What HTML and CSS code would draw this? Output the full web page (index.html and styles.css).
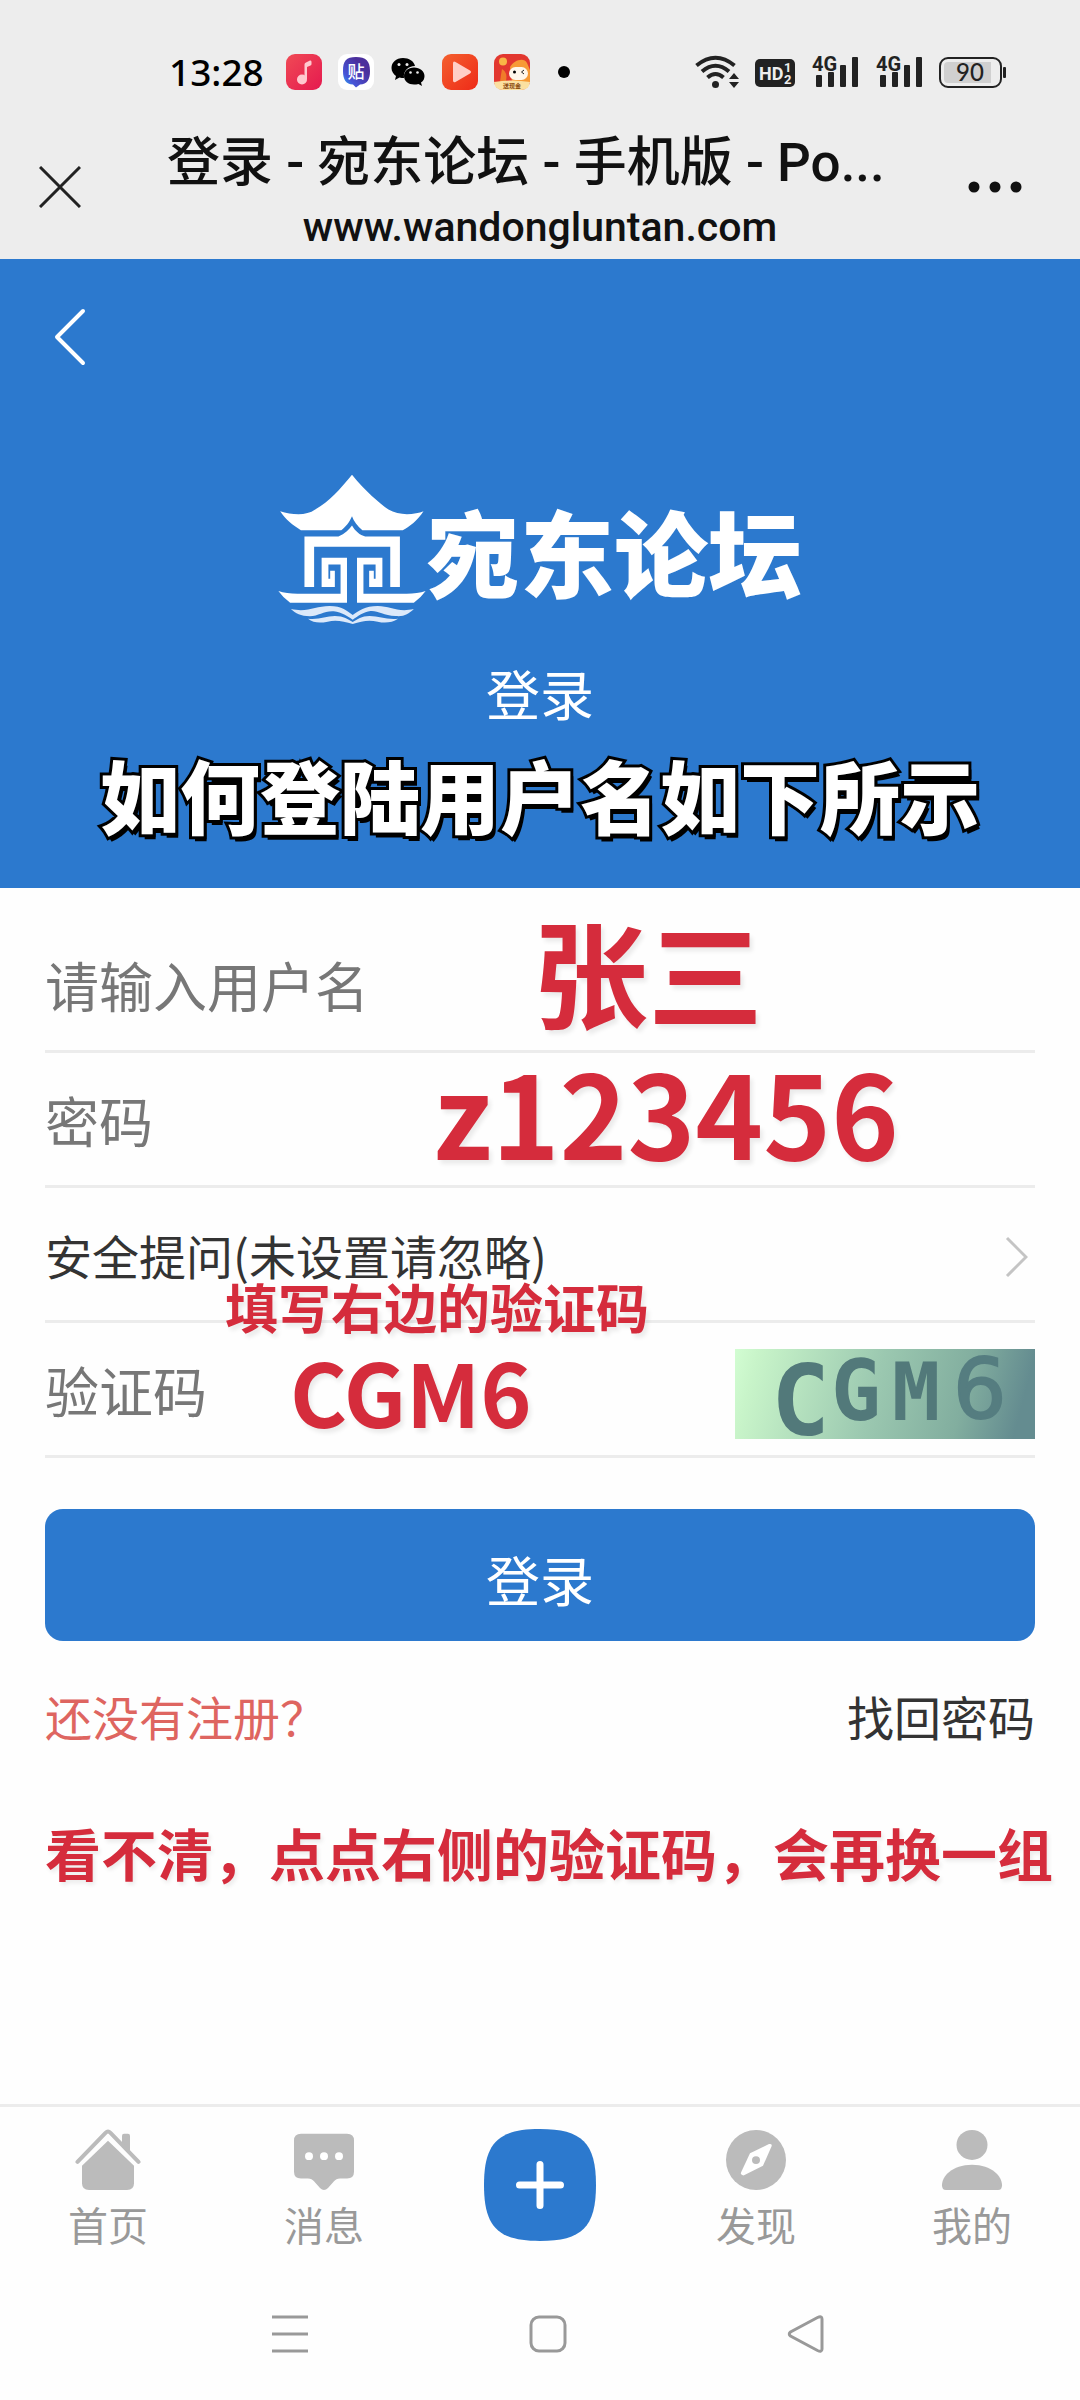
FILE: index.html
```html
<!DOCTYPE html>
<html lang="zh-CN">
<head>
<meta charset="utf-8">
<meta name="viewport" content="width=device-width, initial-scale=1">
<title>登录 - 宛东论坛</title>
<link rel="stylesheet" href="styles.css">
</head>
<body>
<header class="top">
  <div class="status">
    <div class="status-left">
      <time class="clock">13:28</time>
      <svg width="36" height="36" viewBox="0 0 36 36" aria-hidden="true">
        <defs><linearGradient id="music" x1="0" y1="0" x2="1" y2="1"><stop offset="0" stop-color="#f04a55"/><stop offset="1" stop-color="#e5194f"/></linearGradient></defs>
        <rect width="36" height="36" rx="9" fill="url(#music)"/>
        <path d="M18.500 25V10.500Q18.500 9 20 8.500L24 6.500Q25.500 6 25.500 8V10Q25.500 11 24.500 11.500L21 13V25Z" fill="#ffc9cf"/>
        <circle cx="16" cy="25.500" r="5" fill="#ffc9cf"/>
      </svg>
      <svg width="36" height="36" viewBox="0 0 36 36" aria-hidden="true">
        <defs><linearGradient id="tie" x1="1" y1="0" x2="0" y2="1"><stop offset=".3" stop-color="#4b2f9c"/><stop offset=".75" stop-color="#4655d8"/><stop offset="1" stop-color="#1fc4f5"/></linearGradient></defs>
        <rect width="36" height="36" rx="9" fill="#fff"/>
        <path d="M18 3C28 3 32 7 32 17C32 26 29 30 22 30.500L18 33.500L15 30.500C8 30 5 26 5 17C5 7 8 3 18 3Z" fill="url(#tie)"/>
        <text x="18" y="23.500" class="glyph-tie">贴</text>
      </svg>
      <svg width="36" height="36" viewBox="0 0 36 36" aria-hidden="true">
        <path d="M13 4C6 4 1.500 8.500 1.500 14C1.500 17.500 3.500 20 6 22L5 26L9.500 23.500C11 24 12.500 24 14 24C13 17 18 12 25 12C24 7 19 4 13 4Z"/>
        <path d="M24 13.500C18 13.500 14 17.500 14 22C14 27 18.500 30.500 24 30.500C25.500 30.500 27 30.500 28.500 30L32 32L31 28.500C33.500 27 34.500 24.500 34.500 22C34.500 17.500 30 13.500 24 13.500Z"/>
        <g fill="#ededed"><circle cx="9" cy="10.500" r="1.500"/><circle cx="17" cy="10.500" r="1.500"/><circle cx="20.500" cy="18.500" r="1.300"/><circle cx="27.500" cy="18.500" r="1.300"/></g>
      </svg>
      <svg width="36" height="36" viewBox="0 0 36 36" aria-hidden="true">
        <defs><linearGradient id="play" x1="0" y1="0" x2="1" y2="1"><stop offset="0" stop-color="#f4602e"/><stop offset="1" stop-color="#ee2a18"/></linearGradient></defs>
        <rect width="36" height="36" rx="9" fill="url(#play)"/>
        <path d="M11 9.500Q11 6.500 13.500 8L28 16.500Q30 18 28 19.500L13.500 28Q11 29 11 26.500Z" fill="#ffcfc6"/>
      </svg>
      <svg width="36" height="36" viewBox="0 0 36 36" aria-hidden="true">
        <rect width="36" height="36" rx="9" fill="#e2372f"/>
        <path d="M16 13C20 6 30 3 33 9L36 16V28H18Z" fill="#f79a35"/>
        <path d="M8 15Q14 18 12 28H6Q7 20 8 15Z" fill="#f07c2a"/>
        <circle cx="9" cy="7.500" r="4" fill="#f9b646"/>
        <rect x="15" y="13" width="19" height="13" rx="6.500" fill="#fff7ea"/>
        <circle cx="20.500" cy="18" r="1.500"/><path d="M30 16L27.500 18L30 20" stroke="#222" fill="none"/>
        <path d="M0 28Q18 25 36 28Q35 36 27 36H9Q1 36 0 28Z" fill="#fbe0a0"/>
        <text x="18" y="34" class="glyph-cash">送现金</text>
      </svg>
      <svg width="36" height="36" viewBox="0 0 36 36" aria-hidden="true"><circle cx="18" cy="18" r="6"/></svg>
    </div>
    <div class="status-right">
      <svg width="44" height="36" viewBox="0 0 44 36" aria-hidden="true">
        <g fill="none" stroke="#222" stroke-width="4"><path d="M1.500 11.500Q20.500 -4 39.500 11.500"/><path d="M7 17.500Q20.500 6 34 17.500"/><path d="M12.500 23.500Q20.500 16.500 28.500 23.500"/></g>
        <circle cx="20.500" cy="30.500" r="3.500" fill="#222"/><path d="M34 25L39 19L44 25ZM34 28H44L39 34Z" fill="#222"/>
      </svg>
      <svg width="40" height="36" viewBox="0 0 40 36" aria-hidden="true">
        <rect y="5" width="40" height="28" rx="5" fill="#222"/>
        <text x="4" y="26" class="glyph-hd">HD</text><text x="29" y="18" class="glyph-sim">1</text><text x="29" y="30" class="glyph-sim">2</text>
      </svg>
      <svg width="48" height="36" viewBox="0 0 48 36" aria-hidden="true">
        <text x="1" y="17" class="glyph-net">4G</text>
        <g fill="#222"><rect x="5" y="21" width="6" height="12" rx="1"/><rect x="17" y="18" width="6" height="15" rx="1"/><rect x="29" y="11" width="6" height="22" rx="1"/><rect x="41" y="3" width="6" height="30" rx="1"/></g>
      </svg>
      <svg width="48" height="36" viewBox="0 0 48 36" aria-hidden="true">
        <text x="1" y="17" class="glyph-net">4G</text>
        <g fill="#222"><rect x="5" y="21" width="6" height="12" rx="1"/><rect x="17" y="18" width="6" height="15" rx="1"/><rect x="29" y="11" width="6" height="22" rx="1"/><rect x="41" y="3" width="6" height="30" rx="1"/></g>
      </svg>
      <svg width="67" height="36" viewBox="0 0 67 36" aria-hidden="true">
        <rect x="1" y="4" width="61" height="29" rx="8" fill="none" stroke="#222" stroke-width="2"/>
        <path d="M9 8H52V29H9Q5 29 5 25V12Q5 8 9 8Z" fill="#d0d0d0"/>
        <rect x="64" y="13" width="3" height="11" rx="1" fill="#222"/>
        <text x="31" y="27" class="glyph-battery">90</text>
      </svg>
    </div>
  </div>
  <div class="titlebar">
    <button class="icon-button" type="button" aria-label="关闭">
      <svg width="42" height="42" viewBox="0 0 42 42"><path d="M1 1L41 41M41 1L1 41" stroke="#222" stroke-width="3"/></svg>
    </button>
    <div class="page-name">
      <h1 class="page-title">登录 - 宛东论坛 - 手机版 - Po...</h1>
      <p class="page-url">www.wandongluntan.com</p>
    </div>
    <button class="icon-button" type="button" aria-label="更多">
      <svg width="54" height="42" viewBox="0 0 54 42"><g fill="#111"><circle cx="6" cy="21" r="5.500"/><circle cx="27" cy="21" r="5.500"/><circle cx="48" cy="21" r="5.500"/></g></svg>
    </button>
  </div>
</header>

<section class="hero">
  <button class="icon-button back" type="button" aria-label="返回">
    <svg width="34" height="60" viewBox="0 0 34 60"><path d="M30 4L4 30L30 56" fill="none" stroke="#fff" stroke-width="4" stroke-linecap="round" stroke-linejoin="round"/></svg>
  </button>
  <div class="logo">
    <svg width="148" height="151" viewBox="56 73 414 454" preserveAspectRatio="none" aria-hidden="true">
      <g fill="#fff">
        <path d="M263 75C300 125 340 160 365 180C395 200 440 195 463 185C445 215 425 230 405 242H292C278 230 268 215 263 200C255 220 245 232 233 242H120C95 225 78 210 62 185C95 196 135 200 160 180C200 155 230 118 263 75Z"/>
        <path d="M130 261H225C243 253 255 240 263 228C272 245 285 257 300 261H397V413H370V292H157V413H130Z"/>
        <path id="scroll" d="M178 325H249V460H90Q70 445 57 425Q80 433 110 433H231V345H197V388H202V364H215V413H178Z"/>
        <use href="#scroll" transform="translate(526 0) scale(-1 1)"/>
      </g>
      <g fill="#dce9fa">
        <path d="M92 479C140 490 160 470 200 470C235 470 250 485 265 497C280 485 300 470 335 470C370 470 390 490 436 479C420 495 410 502 385 500C350 498 335 483 315 485C295 488 280 500 265 511C250 502 235 488 212 486C185 484 170 500 145 501C120 500 105 492 92 479Z"/>
        <path d="M140 508C170 512 190 500 215 500C240 500 252 510 265 518C278 510 290 500 312 500C340 500 360 512 392 508C375 520 355 522 335 517C310 511 290 515 265 524C240 515 215 511 195 517C170 522 155 520 140 508Z"/>
      </g>
    </svg>
    <span class="logo-text">宛东论坛</span>
  </div>
  <h2 class="hero-title">登录</h2>
  <p class="headline">如何登陆用户名如下所示</p>
</section>

<main class="main">
  <form class="form">
    <div class="row">
      <input class="field" type="text" placeholder="请输入用户名" aria-label="请输入用户名">
      <span class="note note-user">张三</span>
    </div>
    <div class="row">
      <input class="field" type="password" placeholder="密码" aria-label="密码">
      <span class="note note-pass">z123456</span>
    </div>
    <div class="row">
      <select class="field question" aria-label="安全提问"><option>安全提问(未设置请忽略)</option></select>
      <svg class="arrow" width="24" height="42" viewBox="0 0 24 42" aria-hidden="true"><path d="M3 2L22 21L3 40" fill="none" stroke="#c4c4c4" stroke-width="3"/></svg>
    </div>
    <div class="row">
      <input class="field" type="text" placeholder="验证码" aria-label="验证码">
      <span class="note note-hint">填写右边的验证码</span>
      <span class="note note-code">CGM6</span>
      <button class="icon-button captcha" type="button" aria-label="换一组验证码">
        <svg width="300" height="90" viewBox="0 0 300 90">
          <defs><linearGradient id="cap" x1="0" y1="0" x2="1" y2=".08"><stop offset="0" stop-color="#d2fdd2"/><stop offset=".08" stop-color="#c8f4c9"/><stop offset=".5" stop-color="#9bc8b0"/><stop offset=".8" stop-color="#82ae9f"/><stop offset="1" stop-color="#648c90"/></linearGradient></defs>
          <rect width="300" height="90" fill="url(#cap)"/>
          <g class="captcha-text"><text x="36" y="86" font-size="98">C</text><text x="96" y="71" font-size="83">G</text><text x="157" y="71" font-size="80">M</text><text x="218" y="69" font-size="84" class="thin">6</text></g>
        </svg>
      </button>
    </div>
    <button class="submit" type="submit">登录</button>
    <div class="links"><a class="register" href="#register">还没有注册？</a><a href="#recover">找回密码</a></div>
  </form>
  <p class="tip">看不清，点点右侧的验证码，会再换一组</p>
</main>

<nav class="tabs">
  <a class="tab" href="#home">
    <svg width="66" height="62" viewBox="0 0 66 64" preserveAspectRatio="none" aria-hidden="true"><g fill="#bbb"><path d="M33 12L59 38V56Q59 63 52 63H14Q7 63 7 56V38Z"/><path d="M47 7Q47 5 49 5H53Q55 5 55 7V24L47 16Z"/></g><path d="M2.500 34L30.500 4Q33 1.500 35.500 4L63.500 34" fill="none" stroke="#bbb" stroke-width="4" stroke-linecap="round"/></svg>
    <span>首页</span>
  </a>
  <a class="tab" href="#messages">
    <svg width="66" height="62" viewBox="0 0 66 64" preserveAspectRatio="none" aria-hidden="true"><path d="M10 5H56Q63 5 63 12V44Q63 51 56 51H49Q45 51 43 54L37 61Q33 65 29 61L23 54Q21 51 17 51H10Q3 51 3 44V12Q3 5 10 5Z" fill="#bbb"/><g fill="#fff"><circle cx="18" cy="28" r="4"/><circle cx="33" cy="28" r="4"/><circle cx="48" cy="28" r="4"/></g></svg>
    <span>消息</span>
  </a>
  <a class="tab" href="#post" aria-label="发帖">
    <svg width="112" height="112" viewBox="0 0 112 112" aria-hidden="true"><path d="M56 0C98 0 112 14 112 56C112 98 98 112 56 112C14 112 0 98 0 56C0 14 14 0 56 0Z" fill="#2c79ce"/><path d="M35.500 56H76.500M56 35.500V76.500" stroke="#fff" stroke-width="7" stroke-linecap="round"/></svg>
  </a>
  <a class="tab" href="#discover">
    <svg width="66" height="62" viewBox="0 0 66 64" preserveAspectRatio="none" aria-hidden="true"><ellipse cx="33" cy="32" rx="30" ry="31" fill="#bbb"/><path d="M27 25L46 15.500Q49.500 15 48.500 18L40 38L20.500 48Q17.500 48 18 45Z" fill="#fff"/><circle cx="33" cy="32" r="4" fill="#bbb"/></svg>
    <span>发现</span>
  </a>
  <a class="tab" href="#mine">
    <svg width="66" height="62" viewBox="0 0 66 64" preserveAspectRatio="none" aria-hidden="true"><g fill="#bbb"><circle cx="33" cy="16.500" r="15.500"/><path d="M33 37C53 37 63 49 63 58Q63 63 59 63H7Q3 63 3 58C3 49 13 37 33 37Z"/></g></svg>
    <span>我的</span>
  </a>
</nav>

<footer class="system">
  <button class="icon-button" type="button" aria-label="最近任务"><svg width="38" height="38" viewBox="0 0 38 38"><path d="M1 2H37M1 19H37M1 36H37" stroke="#999" stroke-width="3"/></svg></button>
  <button class="icon-button" type="button" aria-label="主屏幕"><svg width="38" height="38" viewBox="0 0 38 38"><rect x="2" y="2" width="34" height="34" rx="8" fill="none" stroke="#999" stroke-width="3"/></svg></button>
  <button class="icon-button" type="button" aria-label="返回上一级"><svg width="38" height="38" viewBox="0 0 38 38"><path d="M30.500 2.500Q35 .5 35 4V34Q35 37.500 30.500 35.500L3.500 21Q1 19 3.500 17Z" fill="none" stroke="#999" stroke-width="3"/></svg></button>
</footer>
</body>
</html>
```
FILE: styles.css
```css
* {
  box-sizing: border-box;
}

body {
  margin: 0;
  min-height: 100vh;
  display: flex;
  flex-direction: column;
  background: #fefefe;
  color: #333;
  font-family: "Noto Sans CJK SC", sans-serif;
}

h1, h2, p {
  margin: 0;
  font-weight: 400;
}

a {
  color: inherit;
  text-decoration: none;
}

svg {
  display: block;
  flex: none;
}

.icon-button {
  padding: 0;
  border: 0;
  background: none;
  flex: none;
}

/* Status bar and browser title */
.top {
  background: #ededed;
}

.status {
  display: flex;
  justify-content: space-between;
  align-items: center;
  height: 110px;
  padding: 34px 74px 0 169px;
}

.status-left,
.status-right {
  display: flex;
  align-items: center;
  gap: 16px;
}

.clock {
  width: 101px;
  color: #000;
  font: 500 37px/40px "Noto Sans", sans-serif;
}

.glyph-tie {
  font-size: 17px;
  font-weight: 500;
  fill: #fff;
  text-anchor: middle;
}

.glyph-cash {
  font-size: 6px;
  font-weight: 700;
  fill: #8a4a10;
  text-anchor: middle;
}

.glyph-hd {
  font: 700 18px Roboto, sans-serif;
  fill: #eee;
}

.glyph-sim {
  font: 700 13px Roboto, sans-serif;
  fill: #eee;
}

.glyph-net {
  font: 700 20px Roboto, sans-serif;
  fill: #222;
}

.glyph-battery {
  font: 500 24px Lato, sans-serif;
  fill: #222;
  text-anchor: middle;
}

.titlebar {
  display: flex;
  justify-content: space-between;
  padding: 20px 58px 1px 39px;
}

.titlebar .icon-button {
  height: 42px;
  margin-top: 36px;
}

.page-name {
  flex: 1;
  margin: 0 55px 0 86px;
  color: #111;
  font-family: Roboto, "Noto Sans CJK SC", sans-serif;
}

.page-title {
  font-size: 53px;
  font-weight: 500;
  line-height: 66px;
  white-space: nowrap;
}

.page-url {
  font-size: 41px;
  font-weight: 500;
  line-height: 62px;
  text-align: center;
}

/* Blue banner */
.hero {
  display: flex;
  flex-direction: column;
  align-items: center;
  padding: 48px 53px 47px;
  background: #2c79ce;
  color: #fff;
}

.back {
  align-self: flex-start;
}

.logo {
  display: flex;
  align-items: center;
  margin-top: 107px;
}

.logo-text {
  font-size: 94px;
  font-weight: 900;
  line-height: 120px;
}

.hero-title {
  margin-top: 32px;
  font-size: 54px;
  line-height: 72px;
}

.headline {
  margin-top: 16px;
  font-size: 80px;
  font-weight: 900;
  line-height: 96px;
  white-space: nowrap;
  -webkit-text-stroke: 6px #000;
  paint-order: stroke fill;
  text-shadow: 3px 5px 0 #000;
}

/* Login form */
.main {
  flex: 1;
  padding: 30px 45px;
}

.row {
  position: relative;
  display: flex;
  align-items: center;
  height: 135px;
  border-bottom: 3px solid #ececec;
}

.field {
  flex: 1;
  min-width: 0;
  height: 100%;
  padding: 0;
  border: 0;
  outline: 0;
  appearance: none;
  background: none;
  color: #333;
  font: 400 54px "Noto Sans CJK SC", sans-serif;
}

.field::placeholder {
  color: #777;
  opacity: 1;
}

.question {
  font-size: 47px;
}

.arrow {
  margin: 6px 7px 0 0;
}

.captcha {
  margin-top: 9px;
}

/* Help notes laid over the form */
.note {
  position: absolute;
  color: #d52c3c;
  font-weight: 700;
  line-height: 1;
  white-space: nowrap;
  text-shadow: 3px 4px 4px rgba(0, 0, 0, .08);
  pointer-events: none;
}

.note-user {
  left: 488px;
  top: -5px;
  font-size: 115px;
}

.note-pass {
  left: 388px;
  top: 0;
  font-size: 115px;
}

.note-hint {
  left: 180px;
  top: -43px;
  font-size: 53px;
}

.note-code {
  left: 245px;
  top: 24px;
  font-size: 87px;
}

.captcha-text {
  font-family: "DejaVu Sans Mono", monospace;
  font-weight: 700;
  fill: #52797a;
}

.captcha-text .thin {
  font-family: "DejaVu Sans", sans-serif;
  font-weight: 400;
  fill: #557d80;
  stroke: #557d80;
  stroke-width: 2px;
}

.submit {
  display: block;
  width: 100%;
  height: 132px;
  margin-top: 51px;
  padding: 6px 0 0;
  border: 0;
  border-radius: 18px;
  background: #2c79ce;
  color: #fff;
  font: 400 54px "Noto Sans CJK SC", sans-serif;
}

.links {
  display: flex;
  justify-content: space-between;
  margin-top: 41px;
  font-size: 47px;
  line-height: 68px;
}

.register {
  color: #de6560;
}

.tip {
  margin-top: 66px;
  color: #d52c3c;
  font-size: 56px;
  font-weight: 700;
  line-height: 72px;
  white-space: nowrap;
  text-shadow: 2px 3px 4px rgba(0, 0, 0, .08);
}

/* Bottom bars */
.tabs {
  display: grid;
  grid-template-columns: repeat(5, 1fr);
  height: 164px;
  padding-top: 22px;
  border-top: 3px solid #ececec;
}

.tab {
  display: flex;
  flex-direction: column;
  align-items: center;
  gap: 4px;
  color: #999;
  font-size: 40px;
  line-height: 58px;
}

.system {
  display: flex;
  justify-content: center;
  align-items: center;
  gap: 220px;
  height: 132px;
  padding-left: 16px;
}
```
